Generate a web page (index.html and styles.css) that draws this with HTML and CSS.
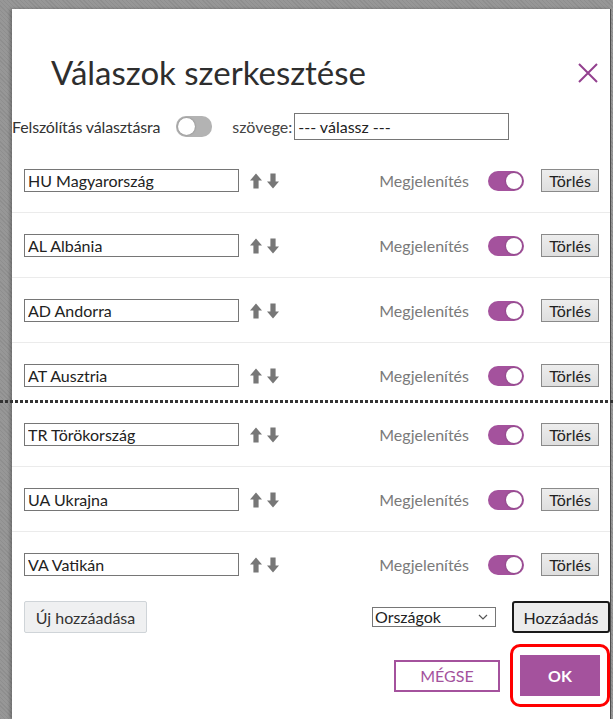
FILE: index.html
```html
<!DOCTYPE html>
<html lang="hu">
<head>
<meta charset="utf-8">
<title>Válaszok szerkesztése</title>
<link rel="stylesheet" href="styles.css">
</head>
<body>
<div class="dialog">
  <div class="head">
    <h1 class="title">Válaszok szerkesztése</h1>
    <button class="close" aria-label="Bezárás">
      <svg width="20" height="20" viewBox="0 0 20 20"><path d="M1 1 L19 19 M19 1 L1 19" stroke="#93408f" stroke-width="2" fill="none"/></svg>
    </button>
  </div>

  <div class="prompt">
    <span class="prompt-label">Felszólítás választásra</span>
    <span class="toggle off"><span class="knob"></span></span>
    <span class="prompt-text">szövege:</span>
    <input class="prompt-input" type="text" value="--- válassz ---">
  </div>

  <div class="rows">
    <div class="row">
      <input class="name" type="text" value="HU Magyarország">
      <svg class="arrows" width="30" height="16" viewBox="0 0 30 16"><path d="M6 0.5 L12 7.5 L8.6 7.5 L8.6 15.5 L3.4 15.5 L3.4 7.5 L0 7.5 Z M23 15.5 L17 8.5 L20.4 8.5 L20.4 0.5 L25.6 0.5 L25.6 8.5 L29 8.5 Z" fill="#777"/></svg>
      <span class="show">Megjelenítés</span>
      <span class="toggle on"><span class="knob"></span></span>
      <button class="del">Törlés</button>
    </div>
    <div class="row">
      <input class="name" type="text" value="AL Albánia">
      <svg class="arrows" width="30" height="16" viewBox="0 0 30 16"><path d="M6 0.5 L12 7.5 L8.6 7.5 L8.6 15.5 L3.4 15.5 L3.4 7.5 L0 7.5 Z M23 15.5 L17 8.5 L20.4 8.5 L20.4 0.5 L25.6 0.5 L25.6 8.5 L29 8.5 Z" fill="#777"/></svg>
      <span class="show">Megjelenítés</span>
      <span class="toggle on"><span class="knob"></span></span>
      <button class="del">Törlés</button>
    </div>
    <div class="row">
      <input class="name" type="text" value="AD Andorra">
      <svg class="arrows" width="30" height="16" viewBox="0 0 30 16"><path d="M6 0.5 L12 7.5 L8.6 7.5 L8.6 15.5 L3.4 15.5 L3.4 7.5 L0 7.5 Z M23 15.5 L17 8.5 L20.4 8.5 L20.4 0.5 L25.6 0.5 L25.6 8.5 L29 8.5 Z" fill="#777"/></svg>
      <span class="show">Megjelenítés</span>
      <span class="toggle on"><span class="knob"></span></span>
      <button class="del">Törlés</button>
    </div>
    <div class="row row-last-top">
      <input class="name" type="text" value="AT Ausztria">
      <svg class="arrows" width="30" height="16" viewBox="0 0 30 16"><path d="M6 0.5 L12 7.5 L8.6 7.5 L8.6 15.5 L3.4 15.5 L3.4 7.5 L0 7.5 Z M23 15.5 L17 8.5 L20.4 8.5 L20.4 0.5 L25.6 0.5 L25.6 8.5 L29 8.5 Z" fill="#777"/></svg>
      <span class="show">Megjelenítés</span>
      <span class="toggle on"><span class="knob"></span></span>
      <button class="del">Törlés</button>
    </div>
    <div class="divider"></div>
    <div class="row row-first-bottom">
      <input class="name" type="text" value="TR Törökország">
      <svg class="arrows" width="30" height="16" viewBox="0 0 30 16"><path d="M6 0.5 L12 7.5 L8.6 7.5 L8.6 15.5 L3.4 15.5 L3.4 7.5 L0 7.5 Z M23 15.5 L17 8.5 L20.4 8.5 L20.4 0.5 L25.6 0.5 L25.6 8.5 L29 8.5 Z" fill="#777"/></svg>
      <span class="show">Megjelenítés</span>
      <span class="toggle on"><span class="knob"></span></span>
      <button class="del">Törlés</button>
    </div>
    <div class="row">
      <input class="name" type="text" value="UA Ukrajna">
      <svg class="arrows" width="30" height="16" viewBox="0 0 30 16"><path d="M6 0.5 L12 7.5 L8.6 7.5 L8.6 15.5 L3.4 15.5 L3.4 7.5 L0 7.5 Z M23 15.5 L17 8.5 L20.4 8.5 L20.4 0.5 L25.6 0.5 L25.6 8.5 L29 8.5 Z" fill="#777"/></svg>
      <span class="show">Megjelenítés</span>
      <span class="toggle on"><span class="knob"></span></span>
      <button class="del">Törlés</button>
    </div>
    <div class="row row-end">
      <input class="name" type="text" value="VA Vatikán">
      <svg class="arrows" width="30" height="16" viewBox="0 0 30 16"><path d="M6 0.5 L12 7.5 L8.6 7.5 L8.6 15.5 L3.4 15.5 L3.4 7.5 L0 7.5 Z M23 15.5 L17 8.5 L20.4 8.5 L20.4 0.5 L25.6 0.5 L25.6 8.5 L29 8.5 Z" fill="#777"/></svg>
      <span class="show">Megjelenítés</span>
      <span class="toggle on"><span class="knob"></span></span>
      <button class="del">Törlés</button>
    </div>
  </div>

  <div class="add-bar">
    <button class="new-btn">Új hozzáadása</button>
    <div class="select-box">
      <select class="list-select"><option>Országok</option></select>
      <svg class="chev" width="10" height="6" viewBox="0 0 10 6"><path d="M1 1 L5 5 L9 1" stroke="#555" stroke-width="1.2" fill="none"/></svg>
    </div>
    <button class="add-btn">Hozzáadás</button>
  </div>

  <div class="actions">
    <button class="cancel">MÉGSE</button>
    <div class="ok-ring"><button class="ok">OK</button></div>
  </div>
</div>
</body>
</html>
```

FILE: styles.css
```css
html, body {
  margin: 0;
  padding: 0;
}
body {
  width: 613px;
  height: 719px;
  overflow: hidden;
  background-color: #929292;
  background-image: repeating-linear-gradient(45deg, #8e8e8e 0 1px, #979797 1px 3px);
  font-family: "Lato", "Noto Sans", sans-serif;
  color: #333;
}
.dialog {
  margin: 9px 0 0 12px;
  width: 598px;
  height: 710px;
  background: #fff;
  border-right: 1px solid #4d4d4d;
  box-shadow: -2px 0 3px rgba(0,0,0,0.25);
}
.head {
  height: 96px;
  display: flex;
  align-items: flex-start;
  padding: 0 12px 0 39px;
  box-sizing: border-box;
}
.title {
  flex: 1;
  margin: 0;
  padding-top: 43px;
  font-size: 33px;
  line-height: 40px;
  font-weight: 400;
  color: #2e2e2e;
}
.close {
  margin-top: 54px;
  width: 20px;
  height: 20px;
  padding: 0;
  border: 0;
  background: none;
  display: block;
}
.close svg { display: block; }

.prompt {
  height: 43px;
  display: flex;
  align-items: center;
  font-size: 16px;
}
.prompt-label { color: #333; letter-spacing: -0.15px; }
.prompt .toggle { margin-left: 16px; }
.prompt-text { margin-left: 20px; color: #444; }
.prompt-input {
  margin-left: 2px;
  width: 215px;
  height: 27px;
  box-sizing: border-box;
  border: 1px solid #767676;
  padding: 0 3px;
  font: 16px "Lato", "Noto Sans", sans-serif;
  color: #222;
}

.toggle {
  position: relative;
  display: inline-block;
  width: 36px;
  height: 20px;
  border-radius: 10px;
  flex: none;
}
.toggle.off { background: #b3b3b3; height: 21px; }
.toggle.on { background: #a4529d; }
.knob {
  position: absolute;
  top: 2px;
  width: 16px;
  height: 16px;
  border-radius: 50%;
  background: #fff;
  box-shadow: 0 0 2px rgba(0,0,0,0.35);
}
.toggle.off .knob { left: 2px; top: 2px; width: 17px; height: 17px; }
.toggle.on .knob { right: 2px; }

.row {
  display: flex;
  align-items: center;
  padding: 21px 11px 20px 12px;
  border-bottom: 1px solid #ebebeb;
  font-size: 16px;
}
.row-last-top {
  padding-bottom: 13px;
  border-bottom: 0;
}
.row-first-bottom { padding-top: 20px; }
.row-end { border-bottom: 0; }
.divider {
  height: 3px;
  margin: 0 -3px 0 -12px;
  background: repeating-linear-gradient(90deg, #333 0 3px, transparent 3px 5px);
}
.name {
  width: 215px;
  height: 23px;
  box-sizing: border-box;
  border: 1px solid #767676;
  padding: 0 3px;
  margin: 0;
  font: 16px "Lato", "Noto Sans", sans-serif;
  color: #222;
}
.arrows {
  margin-left: 11px;
  display: block;
}
.show {
  margin-left: auto;
  color: #7a7a7a;
}
.row .toggle { margin-left: 19px; }
.del {
  margin-left: 17px;
  width: 58px;
  height: 23px;
  padding: 0;
  border: 1px solid #8a8a8a;
  background: linear-gradient(#ededed, #dedede);
  font: 16px "Lato", "Noto Sans", sans-serif;
  color: #222;
  border-radius: 0;
}

.add-bar {
  display: flex;
  align-items: center;
  padding: 5px 0 0 12px;
}
.new-btn {
  width: 123px;
  height: 32px;
  margin-right: auto;
  border: 1px solid #cfd4d8;
  border-radius: 2px;
  background: #eff0f1;
  font: 16px "Lato", "Noto Sans", sans-serif;
  color: #333;
  padding: 0;
}
.select-box {
  position: relative;
  width: 124px;
  height: 20px;
  margin-right: 16px;
}
.list-select {
  display: block;
  width: 124px;
  height: 20px;
  box-sizing: border-box;
  -webkit-appearance: none;
  appearance: none;
  border: 1px solid #767676;
  border-radius: 0;
  background: #fff;
  font: 16px/18px "Lato", "Noto Sans", sans-serif;
  color: #222;
  padding: 0 0 0 2px;
  margin: 0;
}
.chev {
  position: absolute;
  right: 8px;
  top: 7px;
  pointer-events: none;
}
.add-btn {
  width: 98px;
  height: 32px;
  border: 2px solid #1a1a1a;
  border-radius: 3px;
  background: #ececec;
  font: 16px "Lato", "Noto Sans", sans-serif;
  color: #222;
  padding: 0;
}

.actions {
  display: flex;
  justify-content: flex-end;
  align-items: center;
  margin-top: 11px;
}
.cancel {
  width: 106px;
  height: 32px;
  border: 2px solid #a4529d;
  background: #fff;
  color: #a4529d;
  font: 16px "Lato", "Noto Sans", sans-serif;
  padding: 0;
  margin-right: 10px;
}
.ok-ring {
  border: 3px solid #ff0000;
  border-radius: 10px;
  padding: 8px 7px;
}
.ok {
  display: block;
  width: 80px;
  height: 41px;
  border: 0;
  background: #a4529d;
  color: #fff;
  font: 700 16px "Lato", "Noto Sans", sans-serif;
  padding: 0;
}
```
